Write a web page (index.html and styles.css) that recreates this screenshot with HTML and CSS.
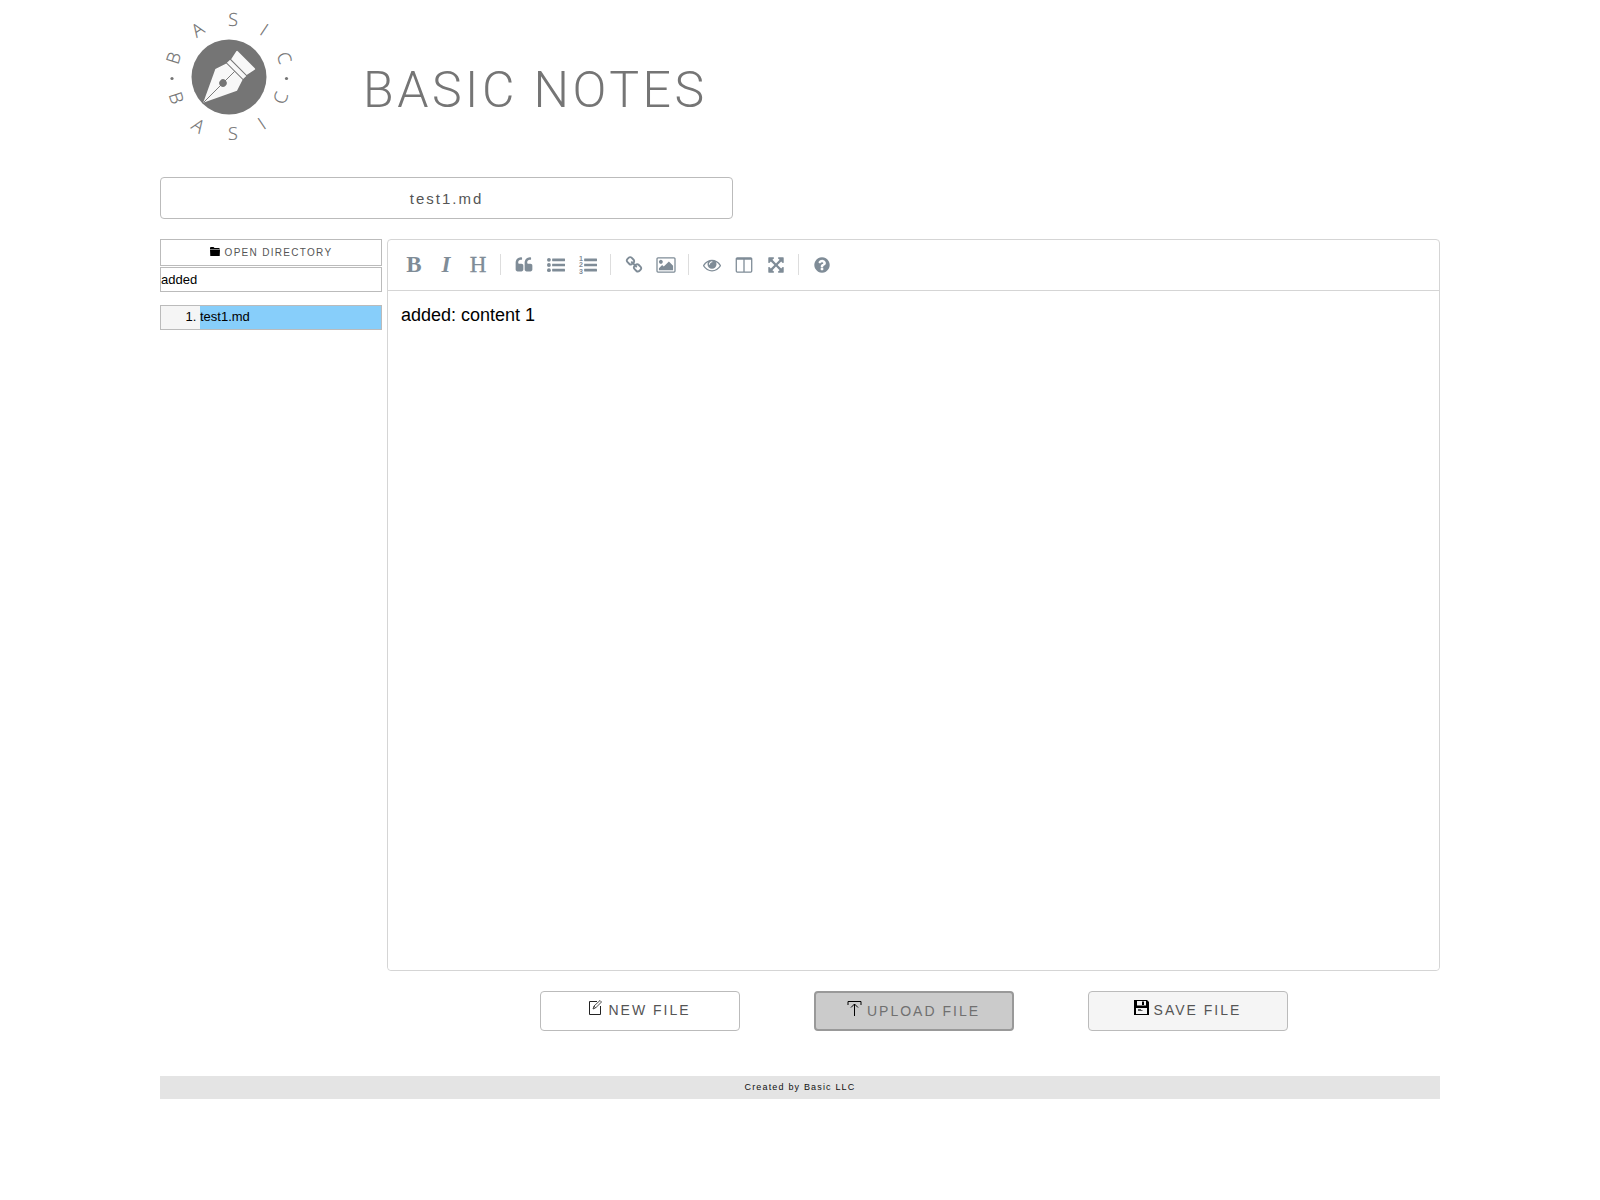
FILE: index.html
```html
<!DOCTYPE html>
<html lang="en">
<head>
<meta charset="utf-8">
<title>Basic Notes</title>
<link rel="stylesheet" href="styles.css">
</head>
<body>
<div class="container">
  <header class="header">
    <svg class="logo" viewBox="0 0 138 144" role="img" aria-label="Basic logo">
      <circle cx="69" cy="77" r="37.5" fill="#757575"/>
      <g transform="translate(69 77) rotate(45)">
        <path d="M-12-24.500h24q1.200 0 1 1.200l-2 9.300h-22l-2-9.300q-.2-1.200 1-1.200zM-11.500-13h23v4.500h-23zM-11.500-7.700h23L15.300 4 0 36.500-15.300 4z" fill="#f8f8f8"/>
        <path d="M0-8v44" stroke="#757575" stroke-width=".9"/>
        <circle cx="0" cy="8.500" r="3.700" fill="#757575"/>
      </g>
      <circle cx="12" cy="78.500" r="1.600" fill="#757575"/>
      <circle cx="126.500" cy="78.500" r="1.600" fill="#757575"/>
      <g class="logo-letters">
        <text transform="translate(14 58) rotate(-73)" y="6">B</text>
        <text transform="translate(38 30) rotate(-34)" y="6">A</text>
        <text transform="translate(73 20) rotate(2)" y="6">S</text>
        <text transform="translate(104 30) rotate(34)" y="6">I</text>
        <text transform="translate(124 58) rotate(72)" y="6">C</text>
        <text transform="translate(16 98) rotate(72)" y="6">B</text>
        <text transform="translate(38 126) rotate(34)" y="6">A</text>
        <text transform="translate(73 134)" y="6">S</text>
        <text transform="translate(102 124) rotate(-34)" y="6">I</text>
        <text transform="translate(121 98) rotate(-72)" y="6">C</text>
      </g>
    </svg>
    <h1 class="brand">BASIC NOTES</h1>
  </header>

  <input class="file-title" type="text" value="test1.md" aria-label="File name">

  <main class="workspace">
    <aside class="sidebar">
      <button class="open-dir" type="button">
        <svg class="folder" viewBox="0 0 10 10" aria-hidden="true"><path d="M0 1q0-1 1-1h2.500l1 1h5v1H0zM0 2.500h10l-.3 6.500H.3z"/></svg>
        OPEN DIRECTORY
      </button>
      <input class="search" type="text" value="added" aria-label="Search files">
      <ol class="files">
        <li class="file"><span class="file-name">test1.md</span></li>
      </ol>
    </aside>

    <section class="main">
      <div class="editor">
        <div class="toolbar">
          <button class="tool tool-bold" type="button" title="Bold">B</button>
          <button class="tool tool-italic" type="button" title="Italic">I</button>
          <button class="tool tool-heading" type="button" title="Heading">H</button>
          <span class="separator"></span>
          <button class="tool" type="button" title="Quote"><svg class="icon" viewBox="0 0 1792 1792"><path d="M832 960v384q0 80-56 136t-136 56h-384q-80 0-136-56t-56-136v-704q0-104 40.500-198.500t109.500-163.500 163.500-109.500 198.500-40.500h64q26 0 45 19t19 45v128q0 26-19 45t-45 19h-64q-106 0-181 75t-75 181v32q0 40 28 68t68 28h224q80 0 136 56t56 136zm896 0v384q0 80-56 136t-136 56h-384q-80 0-136-56t-56-136v-704q0-104 40.500-198.500t109.500-163.500 163.500-109.500 198.500-40.500h64q26 0 45 19t19 45v128q0 26-19 45t-45 19h-64q-106 0-181 75t-75 181v32q0 40 28 68t68 28h224q80 0 136 56t56 136z"/></svg></button>
          <button class="tool" type="button" title="Bulleted list"><svg class="icon" viewBox="0 0 1792 1792"><circle cx="192" cy="384" r="192"/><circle cx="192" cy="896" r="192"/><circle cx="192" cy="1408" r="192"/><rect x="512" y="256" width="1280" height="256" rx="32"/><rect x="512" y="768" width="1280" height="256" rx="32"/><rect x="512" y="1280" width="1280" height="256" rx="32"/></svg></button>
          <button class="tool" type="button" title="Numbered list"><svg class="icon" viewBox="0 0 1792 1792"><g class="digits"><text x="0" y="480">1</text><text x="0" y="1120">2</text><text x="0" y="1760">3</text></g><rect x="512" y="256" width="1280" height="256" rx="32"/><rect x="512" y="768" width="1280" height="256" rx="32"/><rect x="512" y="1280" width="1280" height="256" rx="32"/></svg></button>
          <span class="separator"></span>
          <button class="tool" type="button" title="Link"><svg class="icon" viewBox="0 0 1792 1792"><path d="M1520 1216q0-40-28-68l-208-208q-28-28-68-28-42 0-72 32 3 3 19 18.500t21.500 21.500 15 19 13 25.500 3.500 27.500q0 40-28 68t-68 28q-15 0-27.500-3.500t-25.500-13-19-15-21.500-21.500-18.500-19q-33 31-33 73 0 40 28 68l206 207q27 27 68 27 40 0 68-26l147-146q28-28 28-67zm-703-705q0-40-28-68l-206-207q-28-28-68-28-39 0-68 27l-147 146q-28 28-28 67 0 40 28 68l208 208q27 27 68 27 42 0 72-31-3-3-19-18.500t-21.500-21.500-15-19-13-25.500-3.500-27.500q0-40 28-68t68-28q15 0 27.500 3.500t25.500 13 19 15 21.500 21.500 18.500 19q33-31 33-73zm895 705q0 120-85 203l-147 146q-83 83-203 83-121 0-204-85l-206-207q-83-83-83-203 0-123 88-209l-88-88q-86 88-208 88-120 0-204-84l-208-208q-84-84-84-204t85-203l147-146q83-83 203-83 121 0 204 85l206 207q83 83 83 203 0 123-88 209l88 88q86-88 208-88 120 0 204 84l208 208q84 84 84 204z"/></svg></button>
          <button class="tool" type="button" title="Image"><svg class="icon" viewBox="0 0 1792 1792"><path d="M576 576q0 80-56 136t-136 56-136-56-56-136 56-136 136-56 136 56 56 136zm1024 384v448h-1408v-192l320-320 160 160 512-512zm96-704h-1600q-13 0-22.500 9.500t-9.500 22.500v1216q0 13 9.500 22.500t22.500 9.500h1600q13 0 22.500-9.500t9.500-22.500v-1216q0-13-9.500-22.500t-22.500-9.500zm160 32v1216q0 66-47 113t-113 47h-1600q-66 0-113-47t-47-113v-1216q0-66 47-113t113-47h1600q66 0 113 47t47 113z"/></svg></button>
          <span class="separator"></span>
          <button class="tool" type="button" title="Preview"><svg class="icon" viewBox="0 0 1792 1792"><path d="M1664 960q-152-236-381-353 61 104 61 225 0 185-131.500 316.500t-316.500 131.500-316.500-131.500-131.500-316.500q0-121 61-225-229 117-381 353 133 205 333.500 326.500t434.500 121.500 434.500-121.500 333.500-326.500zm-720-384q0-20-14-34t-34-14q-125 0-214.500 89.500t-89.500 214.500q0 20 14 34t34 14 34-14 14-34q0-86 61-147t147-61q20 0 34-14t14-34zm848 384q0 34-20 69-140 230-376.500 368.500t-499.500 138.500-499.500-139-376.500-368q-20-35-20-69t20-69q140-229 376.500-368t499.500-139 499.500 139 376.500 368q20 35 20 69z"/></svg></button>
          <button class="tool" type="button" title="Side by side"><svg class="icon" viewBox="0 0 1792 1792"><path d="M224 1536h608v-1152h-640v1120q0 13 9.500 22.500t22.500 9.500zm1376-32v-1120h-640v1152h608q13 0 22.500-9.500t9.500-22.500zm128-1216v1216q0 66-47 113t-113 47h-1344q-66 0-113-47t-47-113v-1216q0-66 47-113t113-47h1344q66 0 113 47t47 113z"/></svg></button>
          <button class="tool" type="button" title="Fullscreen"><svg class="icon" viewBox="0 0 1792 1792"><path d="M1411 541l-355 355 355 355 144-144q29-31 70-14 39 17 39 59v448q0 26-19 45t-45 19h-448q-42 0-59-40-17-39 14-69l144-144-355-355-355 355 144 144q31 30 14 69-17 40-59 40h-448q-26 0-45-19t-19-45v-448q0-42 40-59 39-17 69 14l144 144 355-355-355-355-144 144q-19 19-45 19-12 0-24-5-40-17-40-59v-448q0-26 19-45t45-19h448q42 0 59 40 17 39-14 69l-144 144 355 355 355-355-144-144q-31-30-14-69 17-40 59-40h448q26 0 45 19t19 45v448q0 42-39 59-13 5-25 5-26 0-45-19z"/></svg></button>
          <span class="separator"></span>
          <button class="tool" type="button" title="Guide"><svg class="icon" viewBox="0 0 1792 1792"><path d="M1024 1376v-192q0-14-9-23t-23-9h-192q-14 0-23 9t-9 23v192q0 14 9 23t23 9h192q14 0 23-9t9-23zm256-672q0-88-55.500-163t-138.500-116-170-41q-243 0-371 213-15 24 8 42l132 100q7 6 19 6 16 0 25-12 53-68 86-92 34-24 86-24 48 0 85.500 26t37.500 59q0 38-20 61t-68 45q-63 28-115.500 86.500t-52.500 125.500v36q0 14 9 23t23 9h192q14 0 23-9t9-23q0-19 21.500-49.500t54.500-49.500q32-18 49-28.500t46-35 44.500-48 28-60.500 12.500-81zm384 192q0 209-103 385.500t-279.500 279.500-385.500 103-385.500-103-279.500-279.500-103-385.500 103-385.500 279.500-279.500 385.500-103 385.500 103 279.500 279.500 103 385.500z"/></svg></button>
        </div>
        <textarea class="content" aria-label="Note">added: content 1</textarea>
      </div>
      <div class="actions">
        <button class="action" type="button">
          <svg class="action-icon" viewBox="0 0 15 15" fill="none" stroke="#222" aria-hidden="true"><path d="M9 1.500H1.500v13h11V6"/><path d="M5 9l1-3 6-5.500 1.500 1.500-6 6zM6 6l1.500 2" stroke-width=".8"/></svg>
          NEW FILE
        </button>
        <button class="action action-upload" type="button">
          <svg class="action-icon" viewBox="0 0 15 15" fill="none" stroke="#000" aria-hidden="true"><path d="M1 4V.500h13V4M7.500 15V3M4 6.500L7.500 3 11 6.500"/></svg>
          UPLOAD FILE
        </button>
        <button class="action action-save" type="button">
          <svg class="action-icon" viewBox="0 0 15 15" aria-hidden="true"><path fill-rule="evenodd" d="M0 0h13l2 2v13H0zM3 1v4.500h9V1zM2 8v6h11V8z"/><path d="M8 1.500h2V5H8z"/><path d="M4 9.500h3M4 10.500h4.500" stroke="#333" stroke-width=".8"/></svg>
          SAVE FILE
        </button>
      </div>
    </section>
  </main>

  <footer class="footer">Created by Basic LLC</footer>
</div>
</body>
</html>
```
FILE: styles.css
```css
* {
  box-sizing: border-box;
}

body {
  margin: 0;
  background: #fff;
  color: #000;
  font-family: "Liberation Sans", Arial, sans-serif;
}

button,
input,
textarea {
  margin: 0;
  font-family: inherit;
}

.container {
  width: 80%;
  margin: 0 auto;
}

.header {
  display: flex;
  align-items: flex-start;
  gap: 65px;
  height: 177px;
}

.logo {
  flex: none;
  width: 138px;
  height: 144px;
}

.logo-letters {
  fill: #6f6f6f;
  stroke: #6f6f6f;
  stroke-width: 0.2px;
  font-family: "Open Sans", sans-serif;
  font-size: 18px;
  font-weight: 300;
  text-anchor: middle;
}

.brand {
  margin: 60px 0 0;
  color: #757575;
  font-family: Roboto, sans-serif;
  font-size: 50px;
  font-weight: 300;
  letter-spacing: 0.07em;
  line-height: 60px;
}

.file-title {
  display: block;
  width: 573px;
  max-width: 100%;
  height: 42px;
  padding: 0 10px;
  border: 1px solid #bbb;
  border-radius: 4px;
  color: #555;
  font-size: 15px;
  letter-spacing: 2px;
  text-align: center;
}

.workspace {
  display: flex;
  gap: 5px;
  margin-top: 20px;
}

.sidebar {
  flex: none;
  width: 222px;
}

.open-dir {
  display: flex;
  align-items: center;
  justify-content: center;
  gap: 5px;
  width: 100%;
  height: 27px;
  padding: 0 0 1px;
  border: 1px solid #bbb;
  background: #fff;
  color: #555;
  font-size: 10px;
  letter-spacing: 0.13em;
}

.folder {
  width: 10px;
  height: 10px;
  margin-bottom: 1px;
  fill: #000;
}

.search {
  display: block;
  width: 100%;
  height: 25px;
  margin-top: 1px;
  padding: 0;
  border: 1px solid #bbb;
  font-size: 13px;
}

.files {
  margin: 13px 0 0;
  padding: 0 0 0 39px;
  border: 1px solid #bbb;
  background: #f5f5f5;
  font-size: 13px;
}

.file-name {
  display: block;
  height: 23px;
  background: #87cefa;
  line-height: 22px;
}

.main {
  flex: 1;
  min-width: 0;
}

.editor {
  border: 1px solid #d5d5d5;
  border-radius: 4px;
}

.toolbar {
  display: flex;
  align-items: center;
  height: 51px;
  padding: 0 10px 1px;
  border-bottom: 1px solid #d5d5d5;
}

.tool {
  display: flex;
  align-items: center;
  justify-content: center;
  width: 32px;
  height: 30px;
  padding: 0;
  border: 0;
  background: none;
  color: #7f8c97;
  font-family: "Liberation Serif", serif;
  font-size: 23px;
}

.tool-bold {
  font-weight: 700;
}

.tool-italic {
  font-style: italic;
  font-weight: 700;
}

.tool-heading {
  -webkit-text-stroke: 0.4px #7f8c97;
}

.icon {
  width: 18px;
  height: 18px;
  overflow: visible;
  fill: #7f8c97;
}

.digits {
  font-family: "Liberation Sans", sans-serif;
  font-size: 700px;
  font-weight: 700;
}

.separator {
  width: 1px;
  height: 21px;
  margin: 0 7px 0 6px;
  background: #ddd;
}

.content {
  display: block;
  width: 100%;
  height: 679px;
  padding: 14px 13px;
  border: 0;
  border-radius: 4px;
  background: #fff;
  color: #000;
  font-size: 18px;
  line-height: 20px;
  resize: none;
}

.actions {
  display: flex;
  justify-content: center;
  gap: 74px;
  margin-top: 20px;
}

.action {
  display: flex;
  align-items: center;
  justify-content: center;
  gap: 5px;
  width: 200px;
  height: 40px;
  padding: 0 0 3px;
  border: 1px solid #bbb;
  border-radius: 4px;
  background: #fff;
  color: #555;
  font-size: 14px;
  letter-spacing: 2px;
}

.action-upload {
  padding: 0 0 1px;
  border: 2px solid #999;
  background: #cbcbcb;
  color: #707070;
}

.action-save {
  background: #f5f5f5;
}

.action-icon {
  flex: none;
  width: 15px;
  height: 15px;
  margin-bottom: 4px;
}

.footer {
  margin-top: 45px;
  background: #e4e4e4;
  color: #111;
  font-size: 9px;
  letter-spacing: 0.13em;
  line-height: 23px;
  text-align: center;
}
```
